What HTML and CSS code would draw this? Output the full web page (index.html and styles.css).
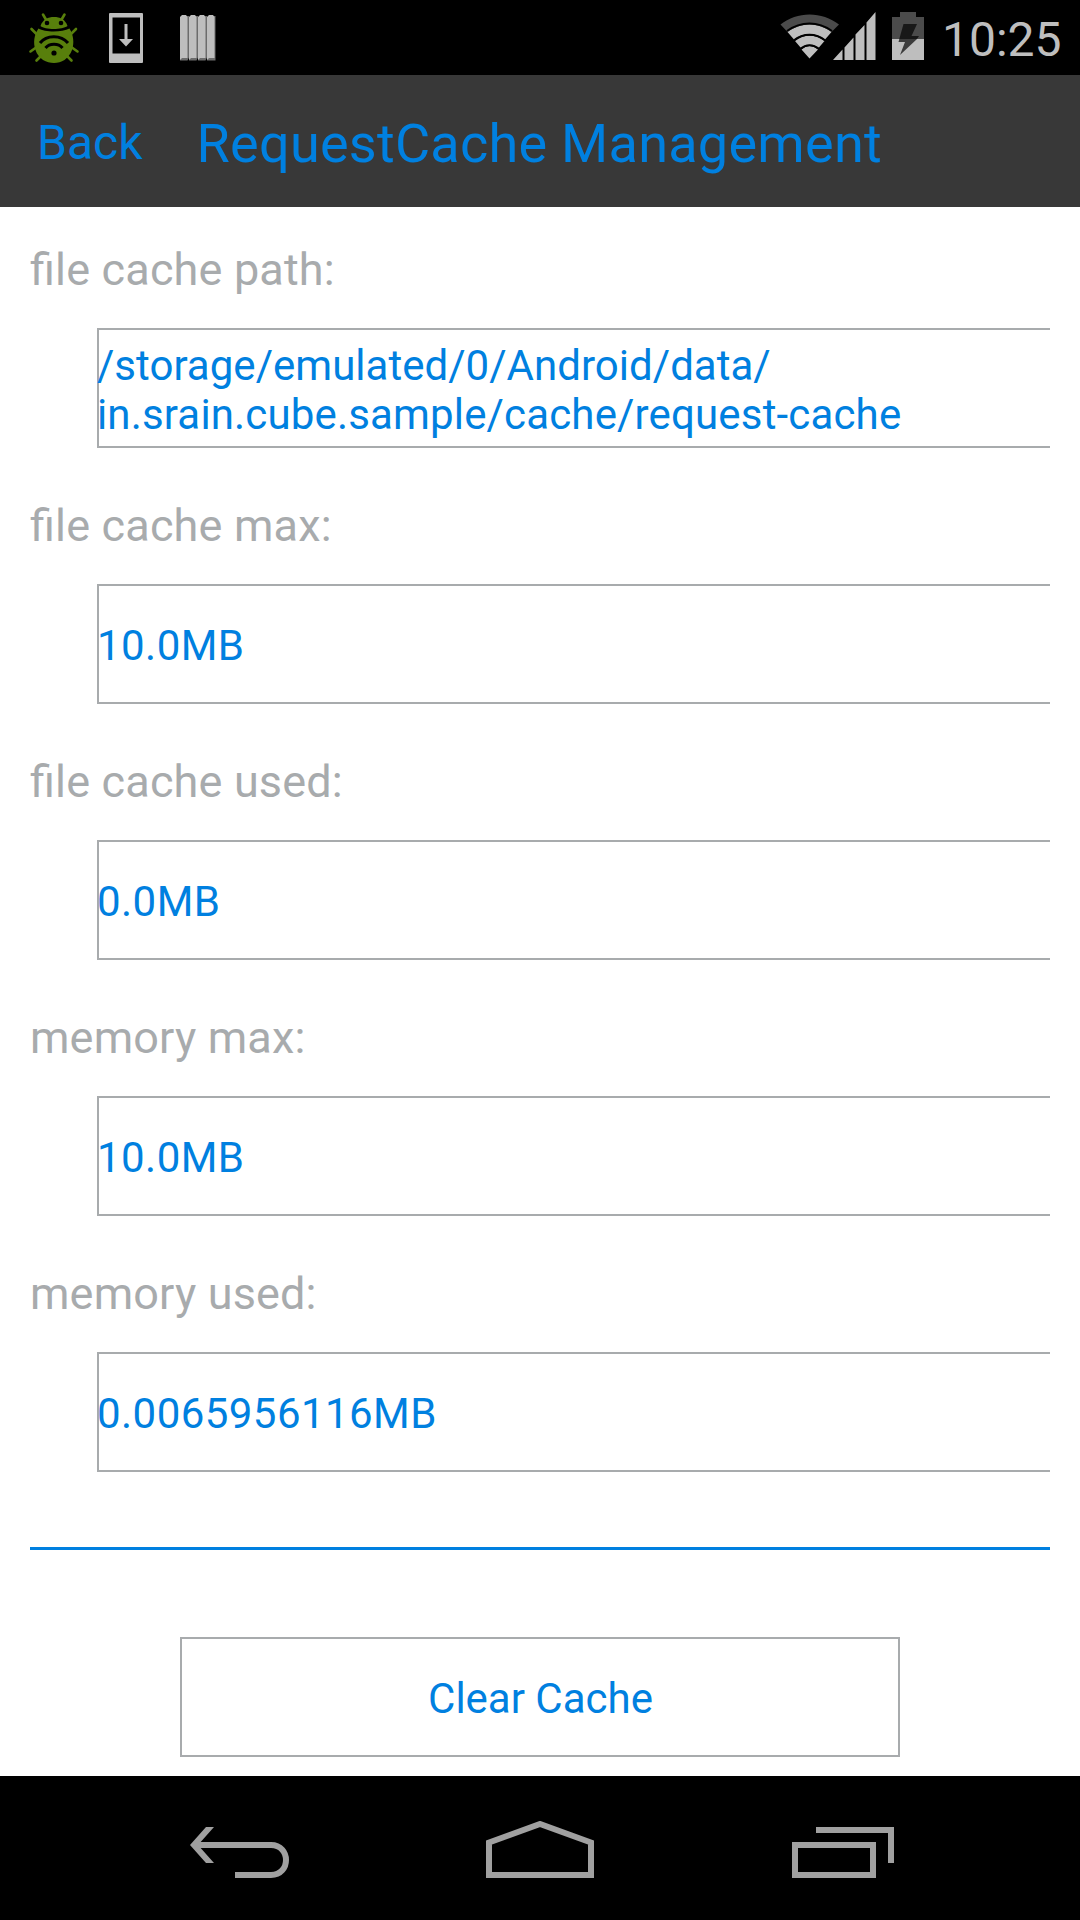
FILE: index.html
```html
<!DOCTYPE html>
<html lang="en">
<head>
<meta charset="utf-8">
<title>RequestCache Management</title>
<link rel="stylesheet" href="styles.css">
</head>
<body>
<header class="status-bar">
  <div class="status-left">
    <svg class="icon-bug" width="52" height="52" viewBox="0 0 52 52">
      <g stroke="#587f0c" stroke-width="2.6" stroke-linecap="round" fill="none">
        <path d="M15 2.500l3.500 6M36.500 2.500l-3.500 6M3.500 17l6 6M48 17l-6 6M2.500 39.500l7-5M49.500 39.500l-7-5M8.500 48.500l5-5M43.500 48.500l-5-5"/>
      </g>
      <path fill="#587f0c" d="M12.500 14C15 7 20 5 26 5S37 7 39.500 14C34 18 17 18 12.500 14z"/>
      <path fill="#587f0c" d="M10.500 16.500C17 20.500 34 20.500 41.500 16.500C45.500 23 46.500 31 44 38C40.500 47 33.500 51 26 51S10.500 47 7.500 38C5 31 6 23 10.500 16.500z"/>
      <circle cx="19" cy="11" r="2.300"/><circle cx="33" cy="11" r="2.300"/>
      <path d="M12 31C18.500 22.500 33 22.500 40 31M17.500 36C21.500 31 30.500 31 34.500 36" fill="none" stroke="#000" stroke-width="3"/>
      <circle cx="26" cy="41" r="2.600"/>
    </svg>
    <svg class="icon-download" width="36" height="50" viewBox="0 0 36 50">
      <path fill="#bebebe" fill-rule="evenodd" d="M1 0h32q1 0 1 1v48q0 1-1 1H1q-1 0-1-1V1q0-1 1-1zM3.500 4.500v36h27.500v-36z"/>
      <path fill="#bebebe" d="M15.500 11h3v15h5.500L17 33.500L10 26h5.500z"/>
    </svg>
    <svg class="icon-bars" width="36" height="46" viewBox="0 0 36 46">
      <g fill="#6c6c6c"><path d="M0 45.500h7.500l1.500-3V1H2zM9 45.500h7.500l1.500-3V1h-7zM18 45.500h7.500l1.500-3V1h-7zM27 45.500h8.500V1H29z"/></g>
      <g fill="#bebebe"><path d="M0 2l2-2h4l1.500 2v41H2l-2 2zM9 2l2-2h4l1.500 2v41H11l-2 2zM18 2l2-2h4l1.500 2v41H20l-2 2zM27 2l2-2h4l1.500 2v41H29l-2 2z"/></g>
    </svg>
  </div>
  <div class="status-right">
    <svg class="icon-wifi" width="60" height="46" viewBox="0 0 60 46">
      <path fill="#4b4b4b" d="M0.500 10.500C17-3 42-3 59 10.500L51.500 18C38 8 21 8 7.500 18z"/>
      <path fill="#bebebe" d="M7.500 18C21 8 38 8 51.500 18L45 25.500C36 18.500 23 18.500 14 25.500zM15 27C24 20 35 20 44.500 27L38.500 34C33 29.500 26 29.500 21 34zM21.500 35.500C26 31 33 31 38 35.500L29.500 44.500z"/>
      <path fill="none" stroke="#000" stroke-width="2" d="M7 17C21 7 38 7 52 17M14 26.200C23 19 36 19 45 26.200M20.500 34.800C26 30 33 30 39 34.800"/>
    </svg>
    <svg class="icon-signal" width="43" height="48" viewBox="0 0 43 48">
      <path fill="#bebebe" d="M0 48L9.500 37.500V48zM11.500 35.500L20.500 25.500V48h-9zM22.500 22.500L31.500 13V48h-9zM33.500 10.500L42.500 0V48h-9z"/>
    </svg>
    <svg class="icon-battery" width="32" height="48" viewBox="0 0 32 48">
      <path fill="#4b4b4b" d="M8 0h16v5h8v22H0V5h8z"/><path fill="#bebebe" d="M0 27h32v21H0z"/>
      <path fill="#181818" d="M11.500 12H25L19.500 24H27L25 27H7.300z"/><path fill="#3c3c3c" d="M7.300 27H25L8 43L13 30H6.500z"/>
    </svg>
    <span class="clock">10:25</span>
  </div>
</header>
<nav class="title-bar">
  <a class="back">Back</a>
  <h1 class="title">RequestCache Management</h1>
</nav>
<main class="content">
  <dl class="fields">
    <dt class="label">file cache path:</dt>
    <dd class="value path"><span class="path-dir">/storage/emulated/0/Android/data/</span><span class="path-name">in.srain.cube.sample/cache/request-cache</span></dd>
    <dt class="label">file cache max:</dt>
    <dd class="value">10.0MB</dd>
    <dt class="label">file cache used:</dt>
    <dd class="value">0.0MB</dd>
    <dt class="label">memory max:</dt>
    <dd class="value">10.0MB</dd>
    <dt class="label">memory used:</dt>
    <dd class="value">0.0065956116MB</dd>
  </dl>
  <hr class="divider">
  <button class="clear" type="button">Clear Cache</button>
</main>
<footer class="nav-bar">
  <svg class="nav-back" width="100" height="53" viewBox="0 0 100 53"><path fill="none" stroke="#a0a0a0" stroke-width="6" d="M45 48H81C101 48 101 18 81 18H8"/><path fill="#a0a0a0" d="M16 0h8L8 18L24 36h-8L0 18z"/></svg>
  <svg class="nav-home" width="108" height="57" viewBox="0 0 108 57"><path fill="none" stroke="#a0a0a0" stroke-width="6" d="M3 54V21.500L54 3L105 21.500V54z"/></svg>
  <svg class="nav-recent" width="102" height="51" viewBox="0 0 102 51"><path fill="none" stroke="#a0a0a0" stroke-width="6" d="M3 18H81V48H3zM24 3H99V36"/></svg>
</footer>
</body>
</html>
```
FILE: styles.css
```css
* { box-sizing: border-box; }
body { margin: 0; width: 1080px; height: 1920px; display: flex; flex-direction: column; background: #fff; color: #0080e0; font-family: Roboto, sans-serif; }
svg { display: block; flex: none; }

.status-bar { height: 75px; background: #000; display: flex; justify-content: space-between; }
.status-left, .status-right { display: flex; align-items: flex-start; }
.status-left { padding-left: 28px; }
.icon-bug { margin-top: 12px; }
.icon-download { margin: 13px 0 0 29px; }
.icon-bars { margin: 15px 0 0 35px; }
.status-right { padding-right: 18px; }
.icon-wifi { margin: 14px -7px 0 0; }
.icon-signal { margin: 12px 16px 0 0; }
.icon-battery { margin: 12px 18px 0 0; }
.clock { width: 120px; color: #bebebe; font-size: 48px; line-height: 79px; }

.title-bar { height: 132px; background: #383838; display: flex; align-items: center; padding: 5px 36px 0 37px; gap: 54px; }
.back { font-size: 48px; line-height: 56px; padding-bottom: 2px; }
.title { margin: 0; font-size: 54px; line-height: 64px; font-weight: 400; letter-spacing: 0.27px; }

.content { flex: 1; padding: 0 30px; display: flex; flex-direction: column; }
.fields { margin: 0; }
.label { height: 121px; padding-top: 35px; font-size: 45px; line-height: 55px; letter-spacing: 0.16px; font-feature-settings: "liga" 1; color: #a8abad; }
.value { height: 120px; margin: 0 0 15px 67px; padding-top: 3px; border: 2px solid #a8abad; border-right: 0; font-size: 42px; line-height: 49px; letter-spacing: 0.45px; text-indent: -2px; display: flex; align-items: center; }
.path { padding-top: 4px; flex-direction: column; align-items: flex-start; justify-content: center; }
.path-dir { letter-spacing: 0.03px; }
.path-name { letter-spacing: 0.16px; }
.divider { width: 100%; height: 3px; margin: 60px 0 87px; border: 0; background: #0080e0; flex: none; }
.clear { width: 720px; height: 120px; align-self: center; padding: 3px 0 0 1px; border: 2px solid #a8abad; background: #fff; color: #0080e0; font: 42px/49px Roboto, sans-serif; }

.nav-bar { height: 144px; background: #000; display: flex; align-items: flex-start; }
.nav-back { margin: 51px 0 0 190px; }
.nav-home { margin: 45px 0 0 196px; }
.nav-recent { margin: 51px 0 0 198px; }
```
